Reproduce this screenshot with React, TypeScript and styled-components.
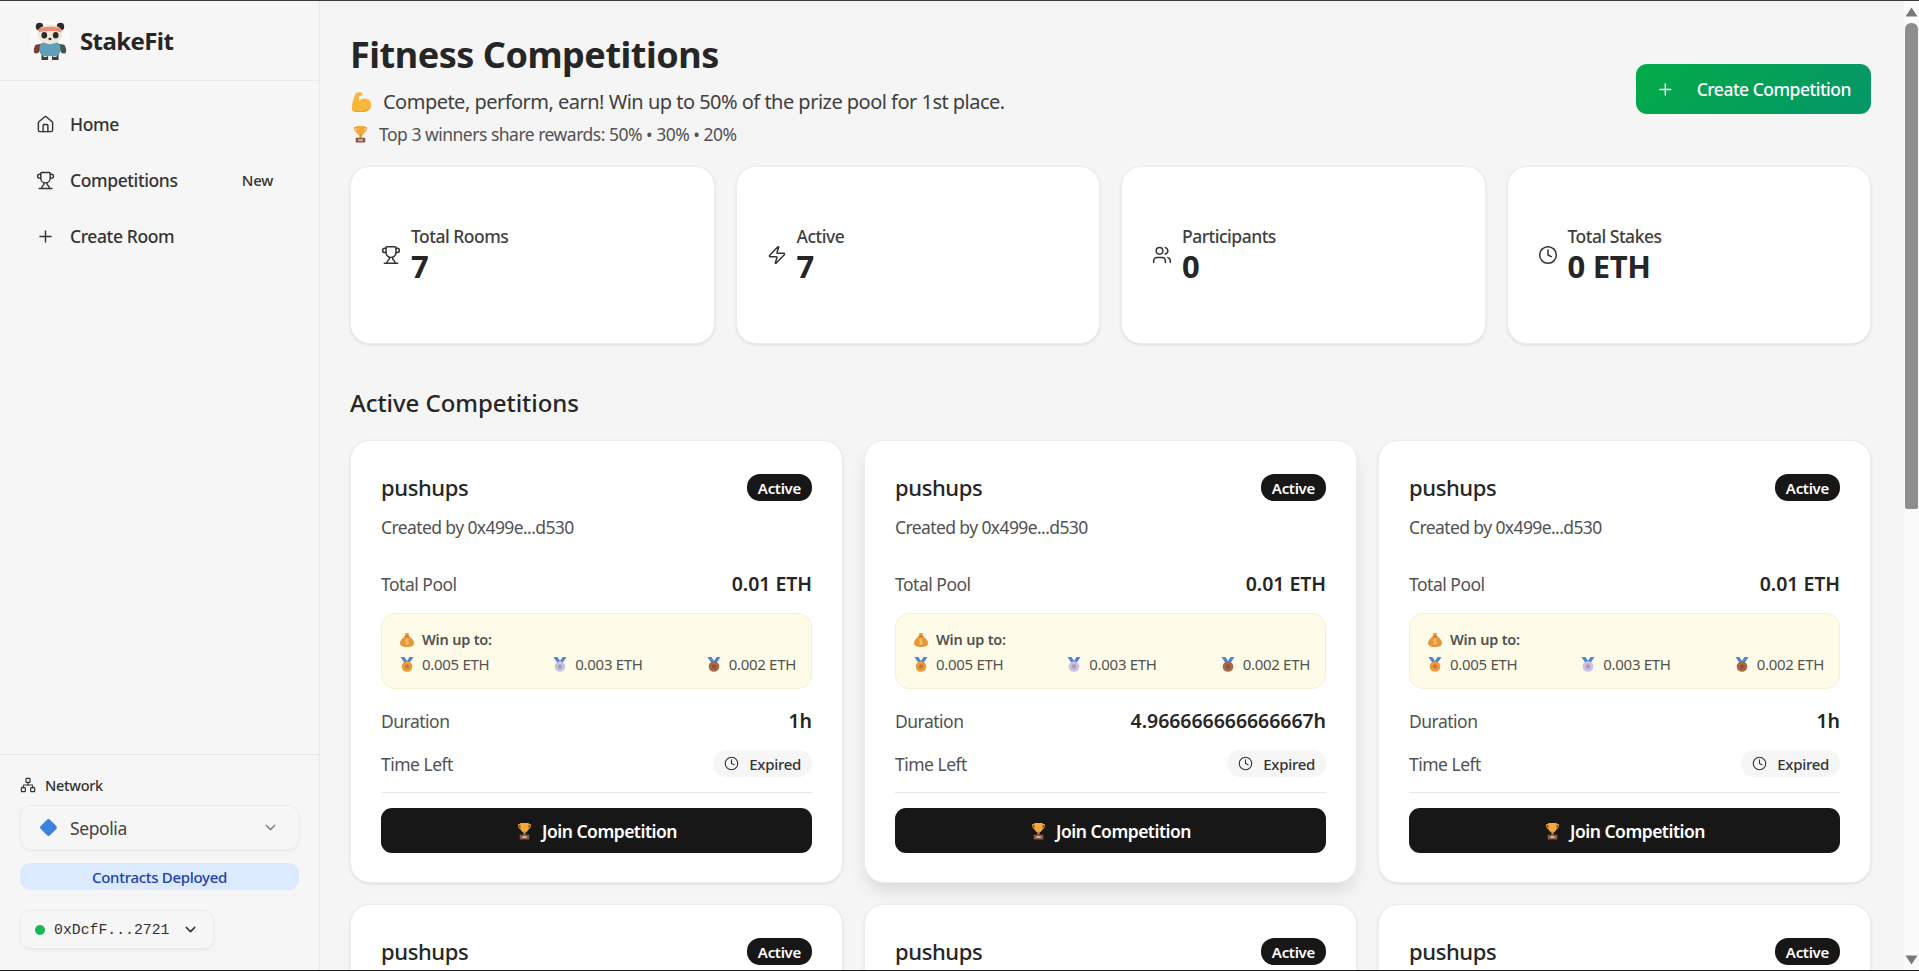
import React from "react";
import styled, { createGlobalStyle } from "styled-components";
import { House, Trophy, Plus, Network, ChevronDown, Zap, Users, Clock } from "lucide-react";

const GlobalStyle = createGlobalStyle`
  html, body {
    margin: 0;
    padding: 0;
    height: 100%;
    overflow: hidden;
    background: #f5f5f5;
  }
  * {
    box-sizing: border-box;
  }
  body {
    font-family: "Noto Sans", "Open Sans", sans-serif;
    color: #262626;
  }
`;

const Shell = styled.div`
  display: flex;
  height: 971px;
  border-top: 1px solid #3a3a3a;
  border-bottom: 1px solid #1c1c1c;
  overflow: hidden;
  background: #f5f5f5;
`;

/* sidebar */
const Sidebar = styled.aside`
  width: 320px;
  flex-shrink: 0;
  display: flex;
  flex-direction: column;
  background: #f6f6f6;
  border-right: 1px solid #e9e9e9;
`;

const Brand = styled.div`
  height: 80px;
  display: flex;
  align-items: center;
  gap: 10px;
  padding: 0 0 0 30px;
  border-bottom: 1px solid #e9e9e9;
`;

const BrandName = styled.span`
  font-size: 24px;
  font-weight: 700;
  letter-spacing: -0.6px;
  color: #262626;
`;

const NavList = styled.nav`
  flex: 1;
  display: flex;
  flex-direction: column;
  gap: 8px;
  padding: 19px 20px 0;
`;

const NavItem = styled.a`
  height: 48px;
  display: flex;
  align-items: center;
  gap: 15px;
  padding: 0 16px;
  font-size: 17.5px;
  font-weight: 500;
  letter-spacing: -0.4px;
  color: #333;
`;

const NavLabel = styled.span`
  flex: 1;
`;

const NavTag = styled.span`
  font-size: 15px;
  letter-spacing: -0.3px;
  margin-right: 10px;
`;

const SideFooter = styled.div`
  display: flex;
  flex-direction: column;
  padding: 20px 20px 20px;
  height: 216px;
  border-top: 1px solid #e6e6e6;
`;

const NetworkLabel = styled.div`
  display: flex;
  align-items: center;
  gap: 9px;
  height: 20px;
  font-size: 14.5px;
  font-weight: 500;
  letter-spacing: -0.3px;
  color: #333;
`;

const NetworkSelect = styled.div`
  margin-top: 10px;
  height: 45px;
  display: flex;
  align-items: center;
  padding: 0 19px 0 20px;
  border: 1px solid #ececec;
  border-radius: 11px;
  box-shadow: 0 1px 3px rgba(0, 0, 0, 0.06);
  font-size: 17.5px;
  letter-spacing: -0.4px;
  color: #444;
`;

const Diamond = styled.span`
  width: 13px;
  height: 13px;
  margin: 0 15px 0 1px;
  background: #3b82dc;
  border-radius: 2px;
  transform: rotate(45deg);
`;

const SelectText = styled.span`
  flex: 1;
`;

const DeployBadge = styled.div`
  margin-top: 13px;
  height: 27px;
  display: flex;
  align-items: center;
  justify-content: center;
  background: #dbeafe;
  border-radius: 10px;
  font-size: 15px;
  font-weight: 500;
  letter-spacing: -0.3px;
  color: #1e40af;
`;

const WalletButton = styled.div`
  margin-top: 20px;
  width: 194px;
  height: 39px;
  display: flex;
  align-items: center;
  gap: 9px;
  padding: 0 14px;
  border: 1px solid #ececec;
  border-radius: 10px;
  box-shadow: 0 1px 3px rgba(0, 0, 0, 0.06);
`;

const GreenDot = styled.span`
  width: 10px;
  height: 10px;
  border-radius: 50%;
  background: #16b855;
`;

const WalletAddress = styled.span`
  font-family: "Liberation Mono", monospace;
  font-size: 14.8px;
  color: #333;
  flex: 1;
`;

/* main column */
const Main = styled.main`
  flex: 1;
  min-width: 0;
  padding: 34px 33px 30px 30px;
  overflow-y: auto;
  scrollbar-width: none;
`;

const PageHeader = styled.header`
  display: flex;
  justify-content: space-between;
  align-items: flex-start;
`;

const Title = styled.h1`
  margin: 0;
  font-size: 36px;
  line-height: 40px;
  font-weight: 700;
  letter-spacing: -0.47px;
  color: #262626;
`;

const Tagline = styled.p`
  display: flex;
  align-items: center;
  gap: 11px;
  margin: 13px 0 0;
  font-size: 20px;
  line-height: 28px;
  letter-spacing: -0.52px;
  color: #404040;
`;

const SubTagline = styled.p`
  display: flex;
  align-items: center;
  gap: 10px;
  margin: 6px 0 0 2px;
  font-size: 17.5px;
  line-height: 24px;
  letter-spacing: -0.5px;
  color: #525252;
`;

const CreateButton = styled.button`
  margin-top: 29px;
  width: 235px;
  height: 50px;
  display: flex;
  align-items: center;
  gap: 22px;
  padding: 0 20px;
  border: none;
  border-radius: 11px;
  background: linear-gradient(135deg, #03ab47, #059669);
  color: #fff;
  font-family: inherit;
  font-size: 17.5px;
  font-weight: 500;
  letter-spacing: -0.5px;
  white-space: nowrap;
`;

const StatGrid = styled.section`
  display: grid;
  grid-template-columns: repeat(4, 1fr);
  gap: 21px;
  margin-top: 20px;
`;

const StatCard = styled.div`
  height: 178px;
  display: flex;
  align-items: center;
  gap: 10px;
  padding: 0 30px;
  background: #fff;
  border: 1px solid #ededed;
  border-radius: 20px;
  box-shadow: 0 1px 3px rgba(0, 0, 0, 0.1);
`;

const StatText = styled.div`
  display: flex;
  flex-direction: column;
  margin-top: -2px;
`;

const StatLabel = styled.span`
  font-size: 17.5px;
  line-height: 24px;
  font-weight: 500;
  letter-spacing: -0.5px;
  color: #404040;
`;

const StatValue = styled.span`
  font-size: 31px;
  line-height: 36px;
  font-weight: 700;
  letter-spacing: -0.3px;
  color: #262626;
`;

const SectionTitle = styled.h2`
  margin: 43px 0 0;
  font-size: 24px;
  line-height: 32px;
  font-weight: 500;
  letter-spacing: -0.05px;
  color: #262626;
`;

const CompetitionGrid = styled.section`
  display: grid;
  grid-template-columns: repeat(3, 1fr);
  gap: 21px;
  margin-top: 21px;
`;

const CompetitionCard = styled.article<{ $raised?: boolean }>`
  height: 443px;
  padding: 33px 30px 0;
  background: #fff;
  border: 1px solid #ededed;
  border-radius: 20px;
  box-shadow: ${(p) =>
    p.$raised ? "0 10px 18px -3px rgba(0, 0, 0, 0.12)" : "0 1px 3px rgba(0, 0, 0, 0.1)"};
`;

const CardHead = styled.div`
  display: flex;
  justify-content: space-between;
  align-items: center;
`;

const CardName = styled.h3`
  margin: 0;
  font-size: 22px;
  font-weight: 500;
  letter-spacing: -0.4px;
  line-height: 27px;
  color: #262626;
`;

const StatusBadge = styled.span`
  height: 27px;
  padding: 0 11px;
  display: flex;
  align-items: center;
  border-radius: 13px;
  background: #171717;
  color: #fff;
  font-size: 15px;
  font-weight: 600;
  letter-spacing: -0.3px;
`;

const CreatedBy = styled.p`
  margin: 14px 0 0;
  font-size: 17.5px;
  line-height: 24px;
  letter-spacing: -0.6px;
  color: #525252;
`;

const InfoRow = styled.div<{ $gap: number }>`
  margin-top: ${(p) => p.$gap}px;
  display: flex;
  justify-content: space-between;
  align-items: center;
  min-height: 24px;
  line-height: 24px;
`;

const InfoLabel = styled.span`
  font-size: 17.5px;
  letter-spacing: -0.5px;
  color: #525252;
`;

const InfoValue = styled.span`
  font-size: 19.5px;
  font-weight: 600;
  letter-spacing: -0.05px;
  color: #262626;
`;

const PrizeBox = styled.div`
  margin-top: 17px;
  height: 76px;
  padding: 12px 15px 0 18px;
  background: #fefce8;
  border: 1px solid #f5f0d2;
  border-radius: 14px;
`;

const PrizeHead = styled.div`
  display: flex;
  align-items: center;
  gap: 8px;
  height: 26px;
  font-size: 14.5px;
  font-weight: 600;
  letter-spacing: -0.2px;
  color: #525252;
`;

const PrizeRow = styled.div`
  display: flex;
  justify-content: space-between;
`;

const Prize = styled.span`
  display: flex;
  align-items: center;
  gap: 8px;
  height: 24px;
  font-size: 15px;
  letter-spacing: -0.3px;
  color: #525252;
`;

const TimePill = styled.span`
  height: 27px;
  display: flex;
  align-items: center;
  gap: 10px;
  padding: 0 11px;
  border-radius: 13px;
  background: #f6f6f6;
  font-size: 15px;
  font-weight: 500;
  letter-spacing: -0.3px;
  color: #333;
`;

const Divider = styled.hr`
  margin: 15px 0 0;
  border: none;
  border-top: 1px solid #e8e8e8;
`;

const JoinButton = styled.button`
  margin-top: 15px;
  width: 100%;
  height: 45px;
  display: flex;
  align-items: center;
  justify-content: center;
  gap: 9px;
  border: none;
  border-radius: 11px;
  background: #171717;
  color: #fff;
  font-family: inherit;
  font-size: 17.5px;
  font-weight: 600;
  letter-spacing: -0.5px;
`;

/* window scrollbar, drawn */
const ScrollRail = styled.div`
  width: 15px;
  flex-shrink: 0;
  display: flex;
  flex-direction: column;
  align-items: center;
  padding: 6px 0 5px;
  background: #fbfbfb;
`;

const ScrollThumb = styled.div`
  width: 13px;
  height: 486px;
  margin: 6px 0 auto;
  border-radius: 6px 6px 2px 2px;
  background: #8e8e8e;
`;

const ArrowIcon = ({ down }: { down?: boolean }) => (
  <svg width="13" height="10" viewBox="0 0 13 10">
    <path d={down ? "M0.5 0.5h12L6.5 9.5z" : "M6.5 0.5l6 9H0.5z"} fill="#787878" />
  </svg>
);

/* emoji and logo drawings */
const PandaLogo = () => (
  <svg width="40" height="44" viewBox="0 0 40 44">
    <circle cx="20" cy="22" r="20" fill="#fbfbfb" />
    <g transform="translate(1 1) scale(0.95)">
      <circle cx="9" cy="7" r="4" fill="#2c2c2c" />
      <circle cx="31" cy="7" r="4" fill="#2c2c2c" />
      <path d="M5 26c-2 3-3 7-1 9 2 1 4 0 5-2l2-8z" fill="#7a3d34" />
      <path d="M35 26c2 3 3 7 1 9-2 1-4 0-5-2l-2-8z" fill="#3f5a45" />
      <path d="M11 36h7v6h-7zM22 36h7v6h-7z" fill="#3d3d3d" />
      <path d="M13 36h4v3h-4zM23 36h4v3h-4z" fill="#d9dccb" />
      <rect x="9" y="23" width="22" height="15" rx="6" fill="#5f9fb8" />
      <ellipse cx="20" cy="15" rx="13" ry="10.5" fill="#f3e7d8" />
      <path d="M7.500 10c3-4 22-4 25 0l-1 3c-5-2-18-2-23 0z" fill="#ea8c72" />
      <ellipse cx="14" cy="16" rx="3" ry="3.400" fill="#2c2c2c" />
      <ellipse cx="26" cy="16" rx="3" ry="3.400" fill="#2c2c2c" />
      <ellipse cx="20" cy="20" rx="1.700" ry="1.200" fill="#2c2c2c" />
    </g>
  </svg>
);

const MuscleEmoji = () => (
  <svg width="22" height="22" viewBox="0 0 22 22">
    <path
      d="M6 2c2-1 5-1 6 0 1 1 0 3-2 3-1 0-1 1-1 2l0 3c2-2 5-3 8-2 3 1 5 4 4 8-1 4-5 5-10 5-4 0-8 0-9-3-1-3 2-12 4-16z"
      fill="#f7b63c"
    />
    <path d="M2 19c3 2 13 2 17-1 1-1 2-3 2-5 0 5-4 8-10 8-4 0-8 0-9-2z" fill="#e8932a" />
  </svg>
);

const TrophyEmoji = () => (
  <svg width="17" height="18" viewBox="0 0 16 17">
    <path d="M2 2h3v1H3c0 2 1 3 2.500 3.500V7.500C3 7 1.500 5 2 2zM14 2h-3v1h2c0 2-1 3-2.500 3.500V7.500C13 7 14.500 5 14 2z" fill="#e59a2f" />
    <path d="M4 1h8v4c0 3-2 5-4 5S4 8 4 5z" fill="#f2a93b" />
    <rect x="7" y="9" width="2" height="3" fill="#d98a25" />
    <rect x="3.500" y="12" width="9" height="4.500" rx="0.500" fill="#8d5a4c" />
    <rect x="6" y="13.500" width="4" height="1.500" fill="#e8c7a8" />
  </svg>
);

const MoneyBagEmoji = () => (
  <svg width="14" height="15" viewBox="0 0 14 15">
    <path d="M5 1h4L8.500 4h-3z" fill="#e8a23c" />
    <path d="M5 4h4c3 2 5 5 5 7 0 3-3 4-7 4s-7-1-7-4c0-2 2-5 5-7z" fill="#e8963a" />
    <rect x="5" y="3.500" width="4" height="1.200" fill="#c9672a" />
    <path d="M7 6.500v6M8.500 7.800c-1-.8-3-.5-3 .7s3 .8 3 2.200-2 1.500-3 .7" stroke="#fbd38a" strokeWidth="0.900" fill="none" />
  </svg>
);

const medalColors = ["#ec9a3c", "#c9c0e4", "#a8674a"];

const MedalEmoji = ({ rank }: { rank: number }) => (
  <svg width="14" height="15" viewBox="0 0 14 15">
    <path d="M0.500 0h4L7 4l2.500-4h4L9.500 6h-5z" fill="#4a86d8" />
    <circle cx="7" cy="9.500" r="5.300" fill={medalColors[rank]} />
    <circle cx="7" cy="9.500" r="2.200" fill="#000" fillOpacity="0.18" />
  </svg>
);

type Competition = {
  name: string;
  creator: string;
  pool: string;
  duration: string;
};

const competitions: Competition[] = [
  { name: "pushups", creator: "0x499e...d530", pool: "0.01 ETH", duration: "1h" },
  { name: "pushups", creator: "0x499e...d530", pool: "0.01 ETH", duration: "4.966666666666667h" },
  { name: "pushups", creator: "0x499e...d530", pool: "0.01 ETH", duration: "1h" },
  { name: "pushups", creator: "0x499e...d530", pool: "0.01 ETH", duration: "1h" },
  { name: "pushups", creator: "0x499e...d530", pool: "0.01 ETH", duration: "1h" },
  { name: "pushups", creator: "0x499e...d530", pool: "0.01 ETH", duration: "1h" },
  { name: "pushups", creator: "0x499e...d530", pool: "0.01 ETH", duration: "1h" },
];

const stats = [
  { label: "Total Rooms", value: "7", Icon: Trophy },
  { label: "Active", value: "7", Icon: Zap },
  { label: "Participants", value: "0", Icon: Users },
  { label: "Total Stakes", value: "0 ETH", Icon: Clock },
];

const prizes = ["0.005 ETH", "0.003 ETH", "0.002 ETH"];

const App = () => {
  return (
    <Shell>
      <GlobalStyle />
      <Sidebar>
        <Brand>
          <PandaLogo />
          <BrandName>StakeFit</BrandName>
        </Brand>
        <NavList>
          <NavItem>
            <House size={19} strokeWidth={1.8} />
            <NavLabel>Home</NavLabel>
          </NavItem>
          <NavItem>
            <Trophy size={19} strokeWidth={1.8} />
            <NavLabel>Competitions</NavLabel>
            <NavTag>New</NavTag>
          </NavItem>
          <NavItem>
            <Plus size={19} strokeWidth={1.8} />
            <NavLabel>Create Room</NavLabel>
          </NavItem>
        </NavList>
        <SideFooter>
          <NetworkLabel>
            <Network size={16} strokeWidth={1.8} />
            Network
          </NetworkLabel>
          <NetworkSelect>
            <Diamond />
            <SelectText>Sepolia</SelectText>
            <ChevronDown size={17} color="#8a8a8a" />
          </NetworkSelect>
          <DeployBadge>Contracts Deployed</DeployBadge>
          <WalletButton>
            <GreenDot />
            <WalletAddress>0xDcfF...2721</WalletAddress>
            <ChevronDown size={17} color="#333" />
          </WalletButton>
        </SideFooter>
      </Sidebar>

      <Main>
        <PageHeader>
          <div>
            <Title>Fitness Competitions</Title>
            <Tagline>
              <MuscleEmoji />
              Compete, perform, earn! Win up to 50% of the prize pool for 1st place.
            </Tagline>
            <SubTagline>
              <TrophyEmoji />
              Top 3 winners share rewards: 50% • 30% • 20%
            </SubTagline>
          </div>
          <CreateButton>
            <Plus size={19} strokeWidth={1.8} />
            Create Competition
          </CreateButton>
        </PageHeader>

        <StatGrid>
          {stats.map(({ label, value, Icon }) => (
            <StatCard key={label}>
              <Icon size={20} strokeWidth={1.8} color="#333" />
              <StatText>
                <StatLabel>{label}</StatLabel>
                <StatValue>{value}</StatValue>
              </StatText>
            </StatCard>
          ))}
        </StatGrid>

        <SectionTitle>Active Competitions</SectionTitle>
        <CompetitionGrid>
          {competitions.map((c, i) => (
            <CompetitionCard key={i} $raised={i === 1}>
              <CardHead>
                <CardName>{c.name}</CardName>
                <StatusBadge>Active</StatusBadge>
              </CardHead>
              <CreatedBy>Created by {c.creator}</CreatedBy>
              <InfoRow $gap={33}>
                <InfoLabel>Total Pool</InfoLabel>
                <InfoValue>{c.pool}</InfoValue>
              </InfoRow>
              <PrizeBox>
                <PrizeHead>
                  <MoneyBagEmoji />
                  Win up to:
                </PrizeHead>
                <PrizeRow>
                  {prizes.map((prize, rank) => (
                    <Prize key={prize}>
                      <MedalEmoji rank={rank} />
                      {prize}
                    </Prize>
                  ))}
                </PrizeRow>
              </PrizeBox>
              <InfoRow $gap={20}>
                <InfoLabel>Duration</InfoLabel>
                <InfoValue>{c.duration}</InfoValue>
              </InfoRow>
              <InfoRow $gap={17}>
                <InfoLabel>Time Left</InfoLabel>
                <TimePill>
                  <Clock size={15} strokeWidth={1.8} />
                  Expired
                </TimePill>
              </InfoRow>
              <Divider />
              <JoinButton>
                <TrophyEmoji />
                Join Competition
              </JoinButton>
            </CompetitionCard>
          ))}
        </CompetitionGrid>
      </Main>

      <ScrollRail>
        <ArrowIcon />
        <ScrollThumb />
        <ArrowIcon down />
      </ScrollRail>
    </Shell>
  );
};

export default App;
